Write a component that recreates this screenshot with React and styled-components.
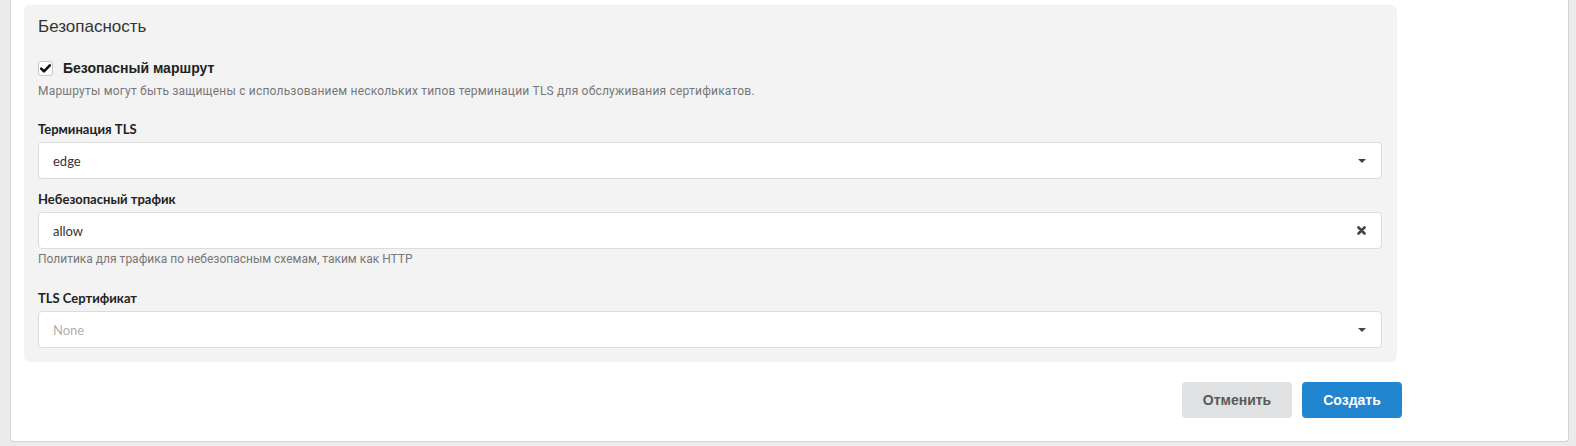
import React, { useState } from 'react';
import styled, { createGlobalStyle } from 'styled-components';

const GlobalStyle = createGlobalStyle`
  html, body {
    margin: 0;
    padding: 0;
    background: #ebebeb;
    font-family: Lato, "Noto Sans", sans-serif;
    color: #333;
  }
`;

const Card = styled.div`
  margin-left: 10px;
  width: 1559px;
  height: 442px;
  box-sizing: border-box;
  background: #fff;
  border: 1px solid #d4d4d4;
  border-top: none;
  border-radius: 0 0 4px 4px;
  padding: 5px 0 0 13px;
`;

const Form = styled.div`
  width: 1378px;
`;

const Section = styled.div`
  width: 1373px;
  box-sizing: border-box;
  background: #f3f3f3;
  border-radius: 6px;
  padding: 12px 15px 14px 14px;
`;

const Heading = styled.div`
  font-family: "Liberation Sans", Arial, sans-serif;
  font-size: 17px;
  line-height: 20px;
  color: #333;
  margin-bottom: 23px;
`;

const CheckRow = styled.label`
  display: flex;
  align-items: center;
  gap: 10px;
  height: 16px;
  cursor: pointer;
`;

const CheckBox = styled.span`
  width: 15px;
  height: 15px;
  box-sizing: border-box;
  border: 1px solid #c8c8c8;
  border-radius: 3px;
  background: #fff;
  display: flex;
  align-items: center;
  justify-content: center;
`;

const CheckLabel = styled.span`
  font-family: "Liberation Sans", Arial, sans-serif;
  font-size: 14px;
  font-weight: 700;
  color: #222;
`;

const Help = styled.div`
  font-family: Roboto, "Liberation Sans", Arial, sans-serif;
  font-size: 12px;
  line-height: 16px;
  color: #777;
  letter-spacing: ${(p) => p.$spacing || 0}px;
  margin-top: ${(p) => p.$top || 0}px;
`;

const Field = styled.div`
  margin-top: ${(p) => p.$top}px;
`;

const Label = styled.div`
  font-size: 13px;
  font-weight: 700;
  line-height: 16px;
  color: #222;
  margin-bottom: 5px;
`;

const Control = styled.div`
  height: 37px;
  box-sizing: border-box;
  background: #fff;
  border: 1px solid #dcdcdc;
  border-radius: 4px;
  display: flex;
  align-items: center;
  padding: 0 15px 0 14px;
  font-size: 13px;
  color: ${(p) => (p.$placeholder ? '#b0b0b0' : '#333')};
`;

const Value = styled.span`
  flex: 1;
`;

const Actions = styled.div`
  display: flex;
  justify-content: flex-end;
  gap: 10px;
  margin-top: 20px;
`;

const Button = styled.button`
  height: 36px;
  min-width: ${(p) => p.$width}px;
  border: none;
  border-radius: 4px;
  font-family: "Liberation Sans", Arial, sans-serif;
  font-size: 14px;
  font-weight: 700;
  cursor: pointer;
  background: ${(p) => (p.$primary ? '#2185d0' : '#e0e1e2')};
  color: ${(p) => (p.$primary ? '#fff' : '#5a5a5a')};
`;

const Caret = () => (
  <svg width="8" height="4" viewBox="0 0 8 4">
    <path d="M0 0 H8 L4 4 Z" fill="#444" />
  </svg>
);

const Cross = () => (
  <svg width="9" height="9" viewBox="0 0 9 9">
    <path d="M1.5 1.5 L7.5 7.5 M7.5 1.5 L1.5 7.5" stroke="#444" strokeWidth="2.6" strokeLinecap="round" />
  </svg>
);

const Check = () => (
  <svg width="11" height="9" viewBox="0 0 11 9">
    <path d="M1.2 4.6 L4 7.4 L9.8 1.4" stroke="#111" strokeWidth="2.6" fill="none" strokeLinecap="round" strokeLinejoin="round" />
  </svg>
);

const App = () => {
  const [secure, setSecure] = useState(true);

  return (
    <>
      <GlobalStyle />
      <Card>
        <Form>
          <Section>
            <Heading>Безопасность</Heading>
            <CheckRow onClick={() => setSecure(!secure)}>
              <CheckBox>{secure && <Check />}</CheckBox>
              <CheckLabel>Безопасный маршрут</CheckLabel>
            </CheckRow>
            <Help $top={7} $spacing={0.2}>
              Маршруты могут быть защищены с использованием нескольких типов терминации TLS для обслуживания сертификатов.
            </Help>

            <Field $top={22}>
              <Label>Терминация TLS</Label>
              <Control>
                <Value>edge</Value>
                <Caret />
              </Control>
            </Field>

            <Field $top={12}>
              <Label>Небезопасный трафик</Label>
              <Control>
                <Value>allow</Value>
                <Cross />
              </Control>
              <Help $top={2}>Политика для трафика по небезопасным схемам, таким как HTTP</Help>
            </Field>

            <Field $top={23}>
              <Label>TLS Сертификат</Label>
              <Control $placeholder>
                <Value>None</Value>
                <Caret />
              </Control>
            </Field>
          </Section>

          <Actions>
            <Button $width={110}>Отменить</Button>
            <Button $primary $width={100}>Создать</Button>
          </Actions>
        </Form>
      </Card>
    </>
  );
};

export default App;
